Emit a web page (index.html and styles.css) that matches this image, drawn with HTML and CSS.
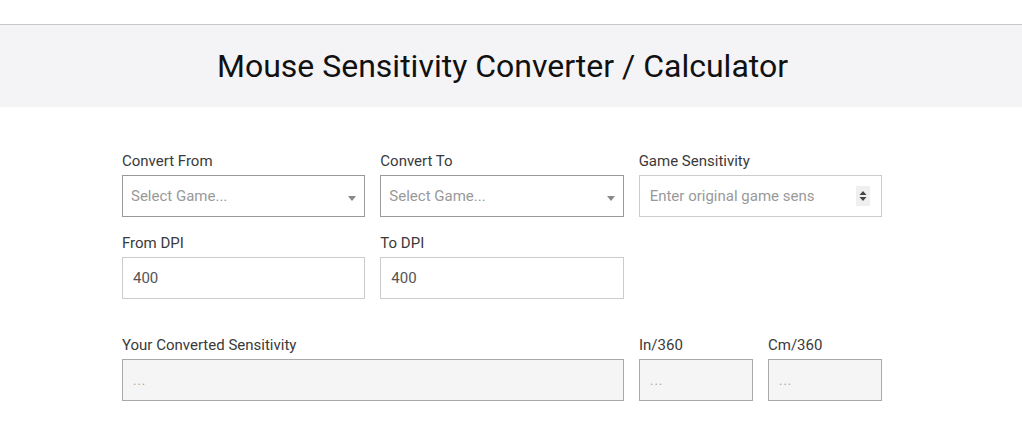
FILE: index.html
```html
<!DOCTYPE html>
<html lang="en">
<head>
<meta charset="utf-8">
<title>Mouse Sensitivity Converter / Calculator</title>
<link rel="stylesheet" href="styles.css">
</head>
<body>
<div class="topspace"></div>
<header class="hero">
  <h1 class="title">Mouse Sensitivity Converter / Calculator</h1>
</header>
<main class="main">
  <div class="row">
    <div class="field">
      <label class="label">Convert From</label>
      <div class="select">
        <span class="placeholder">Select Game...</span>
        <svg class="caret" width="8" height="5" viewBox="0 0 8 5"><path d="M0 0H8L4 5Z" fill="#888"/></svg>
      </div>
    </div>
    <div class="field">
      <label class="label">Convert To</label>
      <div class="select">
        <span class="placeholder">Select Game...</span>
        <svg class="caret" width="8" height="5" viewBox="0 0 8 5"><path d="M0 0H8L4 5Z" fill="#888"/></svg>
      </div>
    </div>
    <div class="field">
      <label class="label">Game Sensitivity</label>
      <div class="input">
        <span class="placeholder">Enter original game sens</span>
        <span class="spinner">
          <svg width="14" height="20" viewBox="0 0 14 20"><rect width="14" height="20" fill="#efefef"/><path d="M3.5 9H10.5L7 5Z" fill="#444"/><path d="M3.5 11H10.5L7 15Z" fill="#444"/></svg>
        </span>
      </div>
    </div>
  </div>
  <div class="row">
    <div class="field">
      <label class="label">From DPI</label>
      <div class="input"><span class="value">400</span></div>
    </div>
    <div class="field">
      <label class="label">To DPI</label>
      <div class="input"><span class="value">400</span></div>
    </div>
    <div class="field"></div>
  </div>
  <div class="row result">
    <div class="field wide">
      <label class="label">Your Converted Sensitivity</label>
      <div class="output"><span class="dots">...</span></div>
    </div>
    <div class="pair">
      <div class="field">
        <label class="label">In/360</label>
        <div class="output"><span class="dots">...</span></div>
      </div>
      <div class="field">
        <label class="label">Cm/360</label>
        <div class="output"><span class="dots">...</span></div>
      </div>
    </div>
  </div>
</main>
</body>
</html>
```
FILE: styles.css
```css
* { box-sizing: border-box; }
body {
  margin: 0;
  background: #fff;
  font-family: Roboto, "Liberation Sans", Arial, sans-serif;
  color: #333;
}
.topspace { height: 24px; }
.hero {
  border-top: 1px solid #c8c8c8;
  background: #f4f4f6;
  height: 83px;
  display: flex;
  align-items: center;
  justify-content: center;
  padding-right: 17px;
}
.title {
  margin: 0;
  font-size: 32px;
  font-weight: 400;
  color: #111;
  letter-spacing: 0;
}
.main {
  width: 760px;
  margin-left: 122px;
  padding-top: 43px;
}
.row {
  display: grid;
  grid-template-columns: 1fr 1fr 1fr;
  column-gap: 15px;
  margin-bottom: 15px;
}
.row.result {
  margin-top: 35px;
  grid-template-columns: 502px 1fr;
}
.pair {
  display: grid;
  grid-template-columns: 1fr 1fr;
  column-gap: 15px;
}
.field { display: flex; flex-direction: column; }
.label {
  font-size: 15px;
  line-height: 20px;
  height: 20px;
  margin-bottom: 5px;
  color: #3a3a3a;
  padding-top: 1px;
}
.select, .input, .output {
  position: relative;
  height: 42px;
  display: flex;
  align-items: center;
  font-size: 15px;
}
.select {
  border: 1px solid #999;
  padding-left: 8px;
}
.input {
  border: 1px solid #ccc;
  padding-left: 10px;
}
.output {
  border: 1px solid #aaa;
  background: #f5f5f5;
  padding-left: 10px;
}
.placeholder { color: #999; }
.value { color: #555; }
.dots { color: #aaa; font-size: 13px; letter-spacing: 1px; }
.caret {
  position: absolute;
  right: 8px;
  top: 20px;
}
.spinner {
  position: absolute;
  right: 11px;
  top: 10px;
  width: 14px;
  height: 20px;
  display: block;
}
.spinner svg { display: block; }
```
